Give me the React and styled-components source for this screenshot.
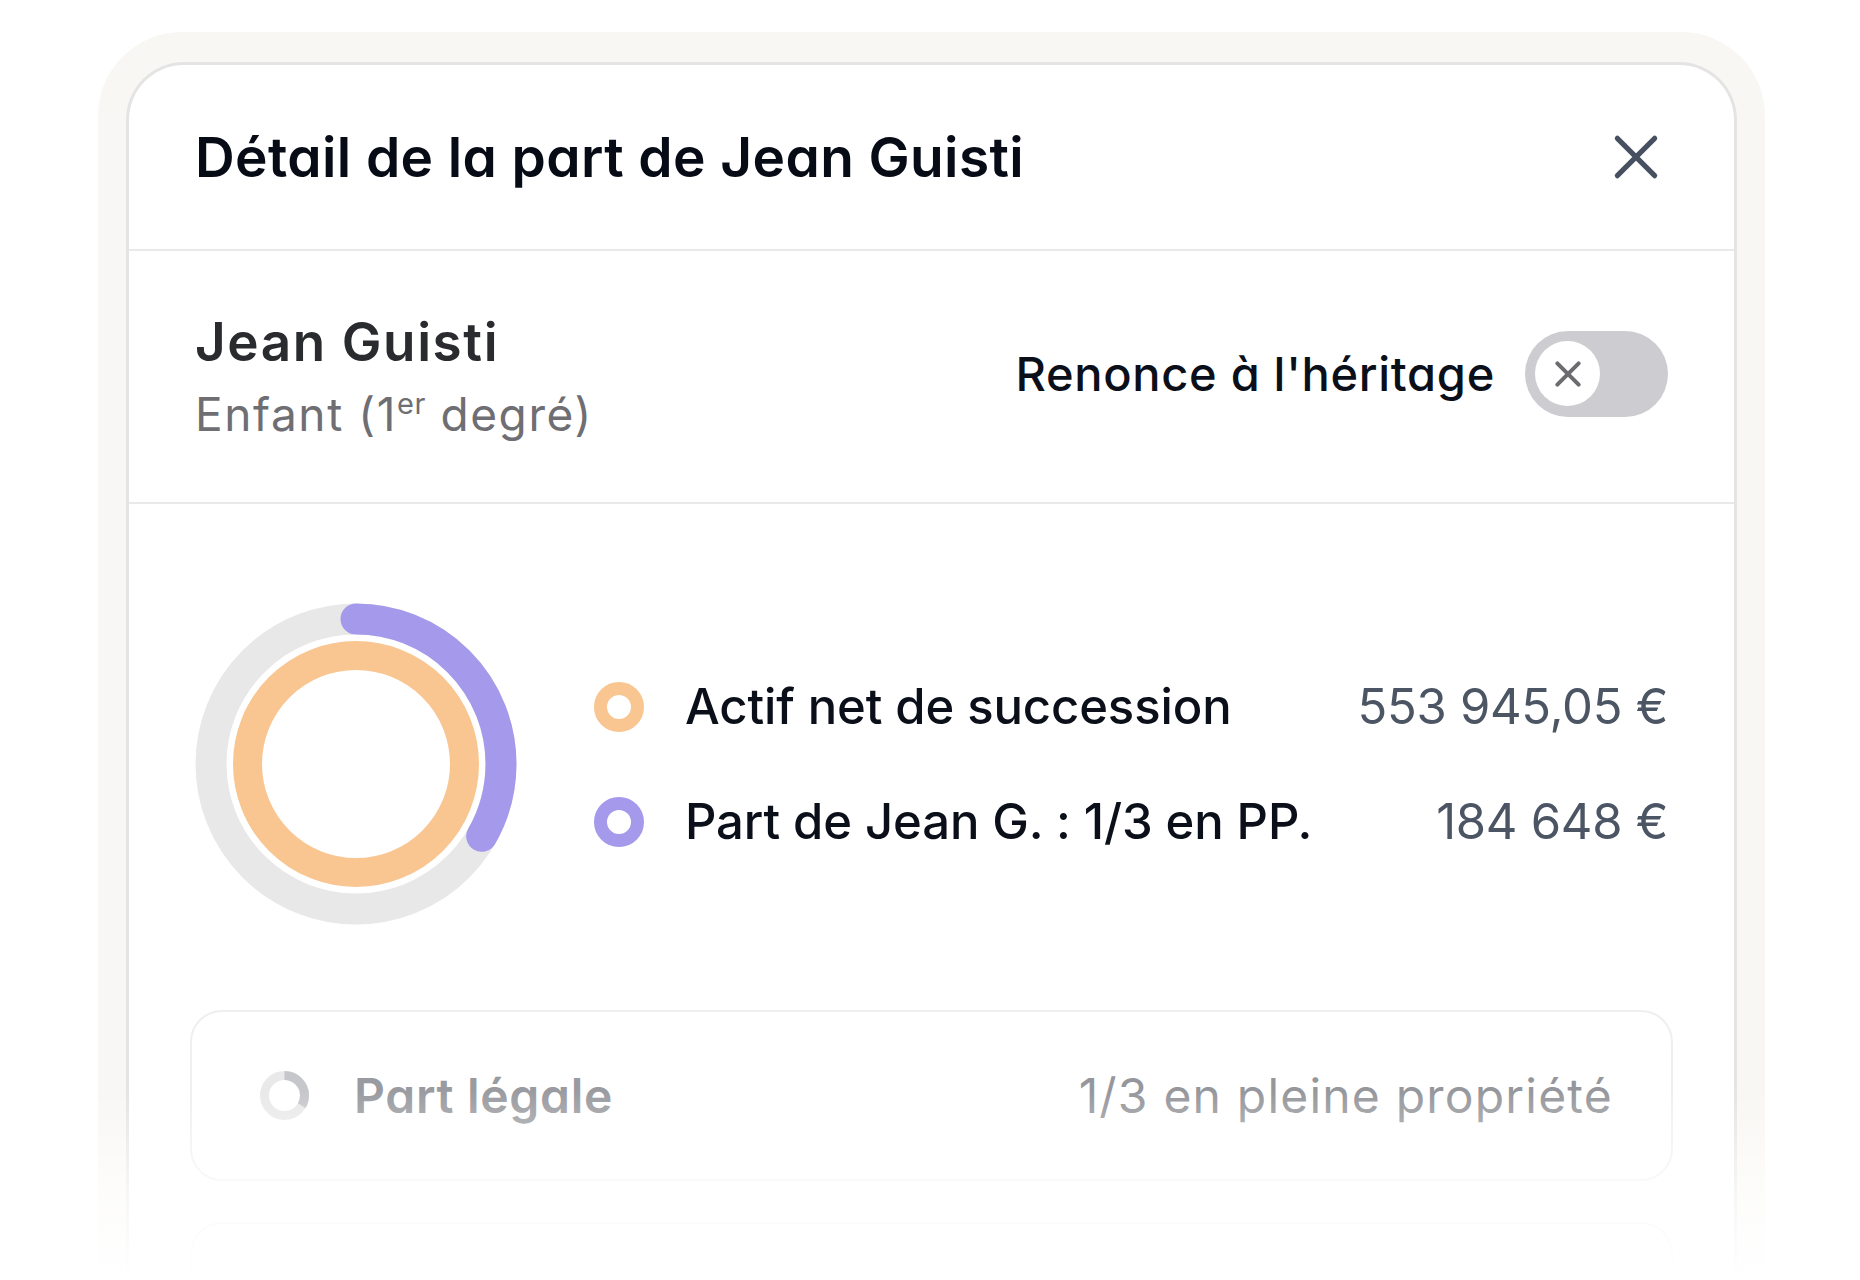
import React from "react";
import styled, { createGlobalStyle } from "styled-components";

const GlobalStyle = createGlobalStyle`
  html, body {
    margin: 0;
    padding: 0;
    background: #ffffff;
  }
  body {
    font-family: Inter, "Noto Sans", sans-serif;
    color: #0b0f19;
    -webkit-font-smoothing: antialiased;
  }
`;

const Page = styled.div`
  position: relative;
  height: 1280px;
  overflow: hidden;
  box-sizing: border-box;
  padding: 32px 95px 0 98px;
`;

const Frame = styled.div`
  background: #f9f7f3;
  border-radius: 84px 84px 0 0;
  padding: 30px 28px 0 28px;
`;

const Card = styled.div`
  background: #ffffff;
  border: 3px solid #e4e4e4;
  border-bottom: none;
  border-radius: 58px 58px 0 0;
  min-height: 1300px;
`;

const Header = styled.div`
  display: flex;
  align-items: center;
  justify-content: space-between;
  height: 184px;
  padding: 0 66px;
  border-bottom: 2px solid #e9e9e9;
`;

const Title = styled.h1`
  margin: 0;
  font-size: 55px;
  font-weight: 600;
  letter-spacing: 0.4px;
  color: #060b16;
  font-feature-settings: "cv11";
`;

const CloseButton = styled.button`
  display: flex;
  align-items: center;
  justify-content: center;
  width: 56px;
  height: 56px;
  margin-right: 4px;
  padding: 0;
  border: none;
  background: none;
  color: #475060;
`;

const Person = styled.div`
  display: flex;
  align-items: center;
  justify-content: space-between;
  height: 251px;
  padding: 0 66px;
  border-bottom: 2px solid #e9e9e9;
`;

const Name = styled.div`
  font-size: 53px;
  line-height: 62px;
  font-weight: 600;
  letter-spacing: 1.6px;
  color: #2a2b2f;
`;

const Role = styled.div`
  margin-top: 12px;
  font-size: 46px;
  line-height: 58px;
  font-weight: 400;
  letter-spacing: 1.6px;
  color: #6e6e73;

  sup {
    font-size: 29px;
    line-height: 0;
    vertical-align: 17px;
    letter-spacing: 0.5px;
  }
`;

const Renounce = styled.label`
  display: flex;
  align-items: center;
  gap: 30px;
  margin-bottom: 6px;
  font-size: 47px;
  font-weight: 500;
  letter-spacing: 0.7px;
  color: #0b0f19;
  font-feature-settings: "cv11";
`;

const Toggle = styled.span`
  display: flex;
  align-items: center;
  box-sizing: border-box;
  width: 143px;
  height: 86px;
  padding: 0 10px;
  border-radius: 43px;
  background: #cdcdd1;
`;

const Knob = styled.span`
  display: flex;
  align-items: center;
  justify-content: center;
  width: 65px;
  height: 65px;
  border-radius: 50%;
  background: #ffffff;
  color: #6b6b70;
`;

const Body = styled.div`
  padding: 99px 66px 0;
`;

const ChartRow = styled.div`
  display: flex;
  align-items: center;
`;

const Legend = styled.div`
  flex: 1;
  display: flex;
  flex-direction: column;
  gap: 65px;
  margin-left: 77px;
`;

const LegendRow = styled.div`
  display: flex;
  align-items: center;
  height: 50px;
`;

const Dot = styled.span`
  flex: none;
  box-sizing: border-box;
  width: 50px;
  height: 50px;
  border-radius: 50%;
  border: 13px solid ${(p) => p.color};
  margin-right: 41px;
`;

const Label = styled.span`
  flex: 1;
  font-size: 49px;
  font-weight: 500;
  letter-spacing: -0.1px;
  color: #0b0f19;
`;

const Value = styled.span`
  font-size: 49px;
  font-weight: 400;
  letter-spacing: -0.3px;
  color: #4b5563;
`;

const ShareCard = styled.div`
  display: flex;
  align-items: center;
  justify-content: space-between;
  height: 171px;
  box-sizing: border-box;
  margin: ${(p) => (p.first ? "85px" : "41px")} -5px 0;
  padding: 0 58px 0 68px;
  border: 2px solid #efefef;
  border-radius: 32px;
`;

const ShareName = styled.div`
  display: flex;
  align-items: center;
  gap: 45px;
  font-size: 48px;
  font-weight: 600;
  letter-spacing: 0.7px;
  color: #9a9ba0;
  font-feature-settings: "cv11";
`;

const ShareValue = styled.div`
  font-size: 48px;
  font-weight: 400;
  letter-spacing: 1.2px;
  color: #96979c;
`;

const Fade = styled.div`
  position: absolute;
  left: 0;
  right: 0;
  bottom: 0;
  height: 190px;
  background: linear-gradient(
    to bottom,
    rgba(255, 255, 255, 0) 0%,
    rgba(255, 255, 255, 0.7) 55%,
    rgba(255, 255, 255, 1) 100%
  );
  pointer-events: none;
`;

// arc helper: share of circle drawn clockwise from 12 o'clock
const arcDash = (r, share) => {
  const c = 2 * Math.PI * r;
  return `${c * share} ${c}`;
};

const Donut = () => (
  <svg width="322" height="322" viewBox="0 0 322 322">
    <circle cx="161" cy="161" r="145" fill="none" stroke="#e8e8e8" strokeWidth="31" />
    <circle cx="161" cy="161" r="108.5" fill="none" stroke="#f9c590" strokeWidth="29" />
    <circle
      cx="161"
      cy="161"
      r="145"
      fill="none"
      stroke="#a599eb"
      strokeWidth="31"
      strokeLinecap="round"
      strokeDasharray={arcDash(145, 0.333)}
      transform="rotate(-90 161 161)"
    />
  </svg>
);

const MiniDonut = () => (
  <svg width="49" height="49" viewBox="0 0 49 49">
    <circle cx="24.5" cy="24.5" r="20" fill="none" stroke="#e9e9ea" strokeWidth="9" />
    <circle
      cx="24.5"
      cy="24.5"
      r="20"
      fill="none"
      stroke="#c6c7ca"
      strokeWidth="9"
      strokeDasharray={arcDash(20, 0.333)}
      transform="rotate(-90 24.5 24.5)"
    />
  </svg>
);

const Cross = ({ size, stroke }) => (
  <svg width={size} height={size} viewBox="0 0 24 24" fill="none">
    <path
      d="M4 4L20 20M20 4L4 20"
      stroke="currentColor"
      strokeWidth={stroke}
      strokeLinecap="round"
    />
  </svg>
);

const App = () => {
  const rows = [
    { color: "#f9c590", label: "Actif net de succession", value: "553 945,05 €" },
    { color: "#a599eb", label: "Part de Jean G. : 1/3 en PP.", value: "184 648 €" },
  ];

  return (
    <>
      <GlobalStyle />
      <Page>
        <Frame>
          <Card>
            <Header>
              <Title>Détail de la part de Jean Guisti</Title>
              <CloseButton aria-label="Fermer">
                <Cross size={56} stroke={2.2} />
              </CloseButton>
            </Header>

            <Person>
              <div>
                <Name>Jean Guisti</Name>
                <Role>
                  Enfant (1<sup>er</sup> degré)
                </Role>
              </div>
              <Renounce>
                Renonce à l'héritage
                <Toggle>
                  <Knob>
                    <Cross size={32} stroke={3} />
                  </Knob>
                </Toggle>
              </Renounce>
            </Person>

            <Body>
              <ChartRow>
                <Donut />
                <Legend>
                  {rows.map((r) => (
                    <LegendRow key={r.label}>
                      <Dot color={r.color} />
                      <Label>{r.label}</Label>
                      <Value>{r.value}</Value>
                    </LegendRow>
                  ))}
                </Legend>
              </ChartRow>

              <ShareCard first>
                <ShareName>
                  <MiniDonut />
                  Part légale
                </ShareName>
                <ShareValue>1/3 en pleine propriété</ShareValue>
              </ShareCard>
              <ShareCard />
            </Body>
          </Card>
        </Frame>
        <Fade />
      </Page>
    </>
  );
};

export default App;
